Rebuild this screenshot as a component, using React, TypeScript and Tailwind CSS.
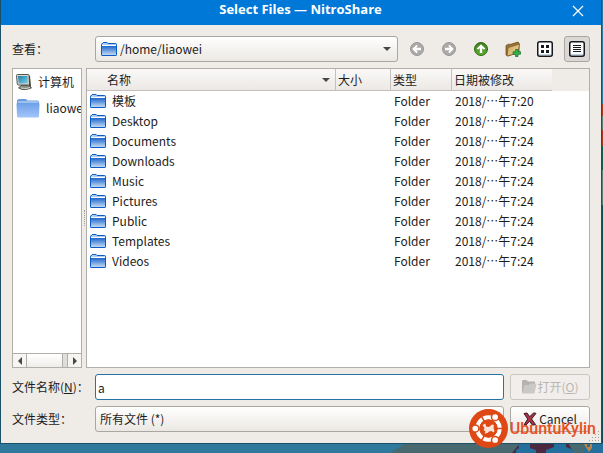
import type { ReactNode } from 'react';

const files = [
  { name: '模板', date: '2018/⋯午7:20' },
  { name: 'Desktop', date: '2018/⋯午7:24' },
  { name: 'Documents', date: '2018/⋯午7:24' },
  { name: 'Downloads', date: '2018/⋯午7:24' },
  { name: 'Music', date: '2018/⋯午7:24' },
  { name: 'Pictures', date: '2018/⋯午7:24' },
  { name: 'Public', date: '2018/⋯午7:24' },
  { name: 'Templates', date: '2018/⋯午7:24' },
  { name: 'Videos', date: '2018/⋯午7:24' },
];

const Gradients = () => (
  <svg className="absolute size-0" aria-hidden="true">
    <defs>
      <linearGradient id="folder" x1="0" y1="0" x2="0" y2="1">
        <stop offset="0" stopColor="#1c66cc" />
        <stop offset="1" stopColor="#c3d8f3" />
      </linearGradient>
      <linearGradient id="home" x1="0" y1="0" x2="0" y2="1">
        <stop offset="0" stopColor="#6da0e6" />
        <stop offset="1" stopColor="#a3c6fa" />
      </linearGradient>
      <linearGradient id="screen" x1="0" y1="0" x2="1" y2="1">
        <stop offset="0" stopColor="#1b7fa8" />
        <stop offset="1" stopColor="#7fd0e8" />
      </linearGradient>
      <linearGradient id="tan" x1="0" y1="0" x2="1" y2="1">
        <stop offset="0" stopColor="#c8a567" />
        <stop offset="1" stopColor="#f6d894" />
      </linearGradient>
      <linearGradient id="green" x1="0" y1="0" x2="0" y2="1">
        <stop offset="0" stopColor="#3e7d1c" />
        <stop offset="1" stopColor="#5fae35" />
      </linearGradient>
    </defs>
  </svg>
);

const FolderIcon = () => (
  <svg className="shrink-0" width="16" height="14" viewBox="0 0 16 14">
    <path d="M.5 2.500Q.5 1.500 1.500 1.500L2.200.5H6.200L7 1.500h7.500q1 0 1 1v10q0 1-1 1h-13q-1 0-1-1z" fill="#a9caf2" stroke="#0a5cc4" />
    <path d="M1 3h14v1H1z" fill="#fff" />
    <path d="M1 4h14v9H1z" fill="url(#folder)" />
    <path d="M.5 3V12.500q0 1 1 1h13q1 0 1-1V3" fill="none" stroke="#0a5cc4" />
  </svg>
);

const ComputerIcon = () => (
  <svg className="shrink-0" width="16" height="16" viewBox="0 0 16 16">
    <path d="M.5 1.500Q.5.500 1.500.5H12q1 0 1 1l.5 8.500q0 1-1 1H2.500q-1 0-1.200-1z" fill="#d9d9d2" stroke="#55564f" />
    <path d="M2 2h9.500l.5 7.500H2.800z" fill="url(#screen)" />
    <path d="M13 1.500l1 .5 1 10-1 1.500-1-1z" fill="#46473f" />
    <path d="M5 11.500h5l4 .5 1.500 2-5 1.500H6L2.500 14z" fill="#8b8c84" stroke="#44453f" strokeWidth=".8" />
    <path d="M5 14l5 .5 4-1" fill="none" stroke="#d3d3cc" />
  </svg>
);

const HomeFolderIcon = () => (
  <svg className="shrink-0" width="24" height="20" viewBox="0 0 24 20">
    <path d="M1 5V2.500L2.500 1H10l1.500 1.500H22L23 4v4H1z" fill="#6b9be0" />
    <path d="M2 3.500h20v1H2z" fill="#d5e6fb" />
    <path d="M.5 6Q.5 5 1.500 5h21q1 0 1 1l-.5 12.500q0 1-1 1H2q-1 0-1-1z" fill="url(#home)" />
  </svg>
);

const ArrowIcon = ({ turn, fill, stroke }: { turn: string; fill: string; stroke: string }) => (
  <svg className={turn} width="16" height="16" viewBox="0 0 16 16">
    <circle cx="8" cy="8" r="6.500" fill={fill} stroke={stroke} />
    <path d="M8 3.200L12.300 7.500 11 8.800 9.200 7.200V12H6.800V7.200L5 8.800 3.700 7.500z" fill="#fff" />
  </svg>
);

const NewFolderIcon = () => (
  <svg width="16" height="16" viewBox="0 0 16 16">
    <path d="M1 4.500L4 3l1 .5L13 1l1 1v9l-11 4-2-1z" fill="#9c7437" stroke="#6c4e20" strokeWidth=".8" />
    <path d="M3 6.500L14.500 3 13 12 2 15z" fill="url(#tan)" stroke="#7d5c28" strokeWidth=".8" />
    <path d="M10.500 8.500h2.500v2.200h2.500v2.500H13v2.300h-2.500v-2.300H8v-2.500h2.500z" fill="#35b44b" stroke="#1c7a31" strokeWidth=".8" />
  </svg>
);

const GridIcon = () => (
  <svg width="16" height="16" viewBox="0 0 16 16">
    <rect x=".75" y=".75" width="14.500" height="14.500" rx="2" fill="#fff" stroke="#15181c" strokeWidth="1.500" />
    <path d="M4 4h3v3H4zM9 4h3v3H9zM4 9h3v3H4zM9 9h3v3H9z" fill="#15181c" />
    <path d="M2 13.500h12" stroke="#bcd3ea" />
  </svg>
);

const ListIcon = () => (
  <svg width="16" height="16" viewBox="0 0 16 16">
    <rect x=".75" y=".75" width="14.500" height="14.500" rx="2" fill="#fff" stroke="#15181c" strokeWidth="1.500" />
    <path d="M4 4h8v1H4zM4 6h8v1H4zM4 8h8v1H4zM4 10h8v1H4z" fill="#15181c" />
    <path d="M2 13.500h12" stroke="#bcd3ea" />
  </svg>
);

const OpenIcon = () => (
  <svg className="shrink-0" width="16" height="16" viewBox="0 0 16 16">
    <path d="M1 2.500Q1 1 2 1h3.500L7 2.500h7V6L13 14H1z" fill="#b5b3b0" />
    <path d="M3.500 6H8l1-1.500h6.500L13.500 14.500H1z" fill="#cbc9c6" />
  </svg>
);

const CancelIcon = () => (
  <svg className="shrink-0" width="14" height="14" viewBox="0 0 14 14">
    <path d="M1 1.500L4 1l2.700 3.700L10.500 1l2.500.3L8.500 7l4 5.500-3 .7-3-4L3 13H1l3.700-6z" fill="#a8324a" stroke="#3a1820" />
  </svg>
);

const Caret = () => (
  <svg className="pointer-events-none shrink-0" width="8" height="4" viewBox="0 0 8 4">
    <path d="M0 0h8L4 4z" fill="#4a4845" />
  </svg>
);

const ToolButton = ({ label, active, children }: { label: string; active?: boolean; children: ReactNode }) => (
  <button
    aria-label={label}
    className={
      active
        ? 'flex size-[26px] shrink-0 items-center justify-center rounded-[3px] border border-[#aaa6a2] bg-[#dbd7d4]'
        : 'flex size-[26px] shrink-0 items-center justify-center'
    }
  >
    {children}
  </button>
);

const Sidebar = () => (
  <div className="flex w-[70px] shrink-0 flex-col overflow-hidden border border-[#b2aeaa] bg-white">
    <a href="#" className="flex h-[26px] items-center gap-1.5 pl-[3px] whitespace-nowrap">
      <ComputerIcon />
      计算机
    </a>
    <a href="#" className="flex h-[26px] items-center gap-1.5 pl-[3px] whitespace-nowrap">
      <HomeFolderIcon />
      liaowei
    </a>
    <div className="mt-auto flex h-3.5 border-t border-[#b2aeaa] bg-[#e0deda]">
      <button aria-label="Scroll left" className="flex w-3.5 items-center justify-center border-r border-[#b2aeaa] bg-[#f6f5f4]">
        <svg width="4" height="8" viewBox="0 0 4 8"><path d="M4 0v8L0 4z" fill="#4a4845" /></svg>
      </button>
      <div className="mr-1 flex-1 border-r border-[#b2aeaa] bg-linear-to-b from-white to-[#efedea]" />
      <button aria-label="Scroll right" className="flex w-3.5 items-center justify-center border-l border-[#b2aeaa] bg-[#f6f5f4]">
        <svg width="4" height="8" viewBox="0 0 4 8"><path d="M0 0v8l4-4z" fill="#4a4845" /></svg>
      </button>
    </div>
  </div>
);

const FileTable = () => (
  <div className="min-w-0 flex-1 border border-[#b2aeaa] bg-white">
    <table className="w-full table-fixed border-separate border-spacing-0 text-left">
      <colgroup>
        <col />
        <col className="w-[55px]" />
        <col className="w-[61px]" />
        <col className="w-[100px]" />
        <col className="w-[37px]" />
      </colgroup>
      <thead>
        <tr className="h-[22px] bg-linear-to-b from-[#faf9f8] to-[#ebe8e4]">
          <th className="border-r border-b border-[#c4c0bc] p-0 font-normal">
            <div className="flex items-center justify-between pr-[5px] pl-5">
              名称
              <Caret />
            </div>
          </th>
          <th className="border-r border-b border-[#c4c0bc] p-0 pl-0.5 font-normal">大小</th>
          <th className="border-r border-b border-[#c4c0bc] p-0 pl-0.5 font-normal">类型</th>
          <th className="border-b border-[#c4c0bc] p-0 pl-0.5 font-normal">日期被修改</th>
          <th className="bg-[#efebe7] p-0" />
        </tr>
      </thead>
      <tbody>
        {files.map((file) => (
          <tr key={file.name} className="h-5">
            <td className="p-0">
              <div className="flex items-center gap-1.5 pl-[3px]">
                <FolderIcon />
                {file.name}
              </div>
            </td>
            <td className="p-0" />
            <td className="p-0 pl-[3px]">Folder</td>
            <td className="p-0 pl-[3px] whitespace-nowrap">{file.date}</td>
            <td className="p-0" />
          </tr>
        ))}
      </tbody>
    </table>
  </div>
);

const Watermark = () => (
  <div className="pointer-events-none absolute right-[7px] bottom-[5px] flex items-center gap-0.5">
    <svg width="39" height="39" viewBox="0 0 39 39">
      <circle cx="19.500" cy="19.500" r="19.500" fill="#dd4814" />
      <circle cx="19.500" cy="19.500" r="11.200" fill="none" stroke="#fff" strokeWidth="4" />
      <g stroke="#dd4814" strokeWidth="1.500">
        <path d="M19.500 19.500L33 19.500M19.500 19.500L12.700 7.800M19.500 19.500L12.700 31.200" />
        <circle cx="6.300" cy="19.500" r="3.600" fill="#fff" />
        <circle cx="26.100" cy="8" r="3.600" fill="#fff" />
        <circle cx="26.100" cy="31" r="3.600" fill="#fff" />
      </g>
      <circle cx="19.500" cy="19.500" r="9" fill="#dd4814" />
      <path d="M13.500 16l3-1.500.5 3 3 .5 3-2.500 2 .5-.5 3 1 3-1 1.500-2-1.500-2.500.5-1.500 1.500-3 .5 1-2-2-1.500 1-2z" fill="#fbe3d9" />
    </svg>
    <span className="font-[Roboto,sans-serif] text-[16px] leading-5 font-medium text-[#e8501c]">UbuntuKylin</span>
  </div>
);

// Desktop wallpaper that shows below and to the right of the dialog
const Wallpaper = () => (
  <>
    <svg className="absolute right-0 bottom-0" width="213" height="10" viewBox="0 0 213 10" aria-hidden="true">
      <path d="M0 10L16 0h197v10z" fill="#48696f" />
      <path d="M130 0h48l6 10h-62z" fill="#4b2940" />
      <path d="M128 0h12v5l6 2v3h-20V7l3-2zM164 0h12v4l8 3v3h-28V7l8-3zM199 0h14v10h-20V6l5-2z" fill="#246f9b" />
      <path d="M194 1h3v3h3V1h2v4l-3 4-2-3z" fill="#b8854a" />
    </svg>
    <svg className="absolute top-0 right-0 h-full w-px" viewBox="0 0 1 453" preserveAspectRatio="none" aria-hidden="true">
      <path d="M0 146h1v24H0z" fill="#12604c" />
      <path d="M0 104h1v12H0zM0 130h1v16H0z" fill="#a83a25" />
      <path d="M0 116h1v14H0zM0 170h1v35H0z" fill="#5d8078" />
      <path d="M0 205h1v238H0z" fill="#0f4a52" />
    </svg>
  </>
);

const SizeGrip = () => (
  <svg className="absolute right-1 bottom-3" width="10" height="10" viewBox="0 0 10 10" aria-hidden="true">
    <path d="M9 0h1v1H9zM6 3h1v1H6zM9 3h1v1H9zM3 6h1v1H3zM6 6h1v1H6zM9 6h1v1H9zM0 9h1v1H0zM3 9h1v1H3zM6 9h1v1H6zM9 9h1v1H9z" fill="#a5a19d" />
  </svg>
);

export default function App() {
  return (
    <div className="relative flex min-h-screen flex-col overflow-hidden bg-[#2f7a9c] pb-[9px] font-['Noto_Sans_CJK_SC',sans-serif] text-[12px] leading-5 text-[#1c1c1c]">
      <Gradients />
      <Wallpaper />
      <div className="relative mr-px flex flex-1 flex-col border-r border-b border-l border-[#1a5068]">
        <header className="flex h-[25px] items-center bg-[#0078d7] pr-[17px] pl-7 text-white">
          <h1 className="flex-1 pb-[7px] text-center font-['Open_Sans',sans-serif] text-[13px] font-bold">Select Files — NitroShare</h1>
          <button aria-label="Close" className="pb-1">
            <svg width="12" height="12" viewBox="0 0 12 12"><path d="M1 1l10 10M11 1L1 11" stroke="#fff" strokeWidth="1.200" /></svg>
          </button>
        </header>
        <main className="flex flex-1 flex-col gap-1.5 bg-[#efebe7] p-[11px]">
          <div className="flex items-center gap-1.5">
            <label htmlFor="look" className="w-[77px] shrink-0">查看：</label>
            <div className="flex h-[26px] flex-1 items-center rounded-[3px] border border-[#aaa6a2] bg-linear-to-b from-white to-[#ebe8e4] pr-1.5 pl-[5px]">
              <FolderIcon />
              <select id="look" className="min-w-0 flex-1 appearance-none pl-[3px] outline-none">
                <option>/home/liaowei</option>
              </select>
              <Caret />
            </div>
            <ToolButton label="Back"><ArrowIcon turn="-rotate-90" fill="#aaa9a7" stroke="#999896" /></ToolButton>
            <ToolButton label="Forward"><ArrowIcon turn="rotate-90" fill="#aaa9a7" stroke="#999896" /></ToolButton>
            <ToolButton label="Parent directory"><ArrowIcon turn="rotate-0" fill="url(#green)" stroke="#2f6b12" /></ToolButton>
            <ToolButton label="Create new folder"><NewFolderIcon /></ToolButton>
            <ToolButton label="List view"><GridIcon /></ToolButton>
            <ToolButton label="Detail view" active><ListIcon /></ToolButton>
          </div>
          <div className="flex flex-1">
            <Sidebar />
            <div className="flex w-1 shrink-0 items-center justify-center">
              <div className="h-4 border-l border-dotted border-[#a5a19d]" />
            </div>
            <FileTable />
          </div>
          <div className="flex items-center gap-1.5">
            <label htmlFor="filename" className="w-[77px] shrink-0 whitespace-nowrap">文件名称(<u>N</u>)：</label>
            <input id="filename" defaultValue="a" className="h-[26px] min-w-0 flex-1 rounded-[3px] border border-[#2674a5] bg-white px-0.5 outline-none" />
            <button disabled className="flex h-[26px] w-20 items-center justify-center rounded-[3px] border border-[#c9c5c1] bg-[#f1eeeb] text-[#b9b7b4]">
              <OpenIcon />
              <span>打开(<u>O</u>)</span>
            </button>
          </div>
          <div className="flex items-center gap-1.5">
            <label htmlFor="filetype" className="w-[77px] shrink-0">文件类型：</label>
            <select id="filetype" className="h-[26px] min-w-0 flex-1 appearance-none rounded-[3px] border border-[#aaa6a2] bg-linear-to-b from-white to-[#ebe8e4] px-1 outline-none">
              <option>所有文件 (*)</option>
            </select>
            <button className="flex h-[26px] w-20 items-center justify-center gap-0.5 rounded-[3px] border border-[#aaa6a2] bg-linear-to-b from-white to-[#ebe8e4]">
              <CancelIcon />
              Cancel
            </button>
          </div>
        </main>
      </div>
      <SizeGrip />
      <Watermark />
    </div>
  );
}
